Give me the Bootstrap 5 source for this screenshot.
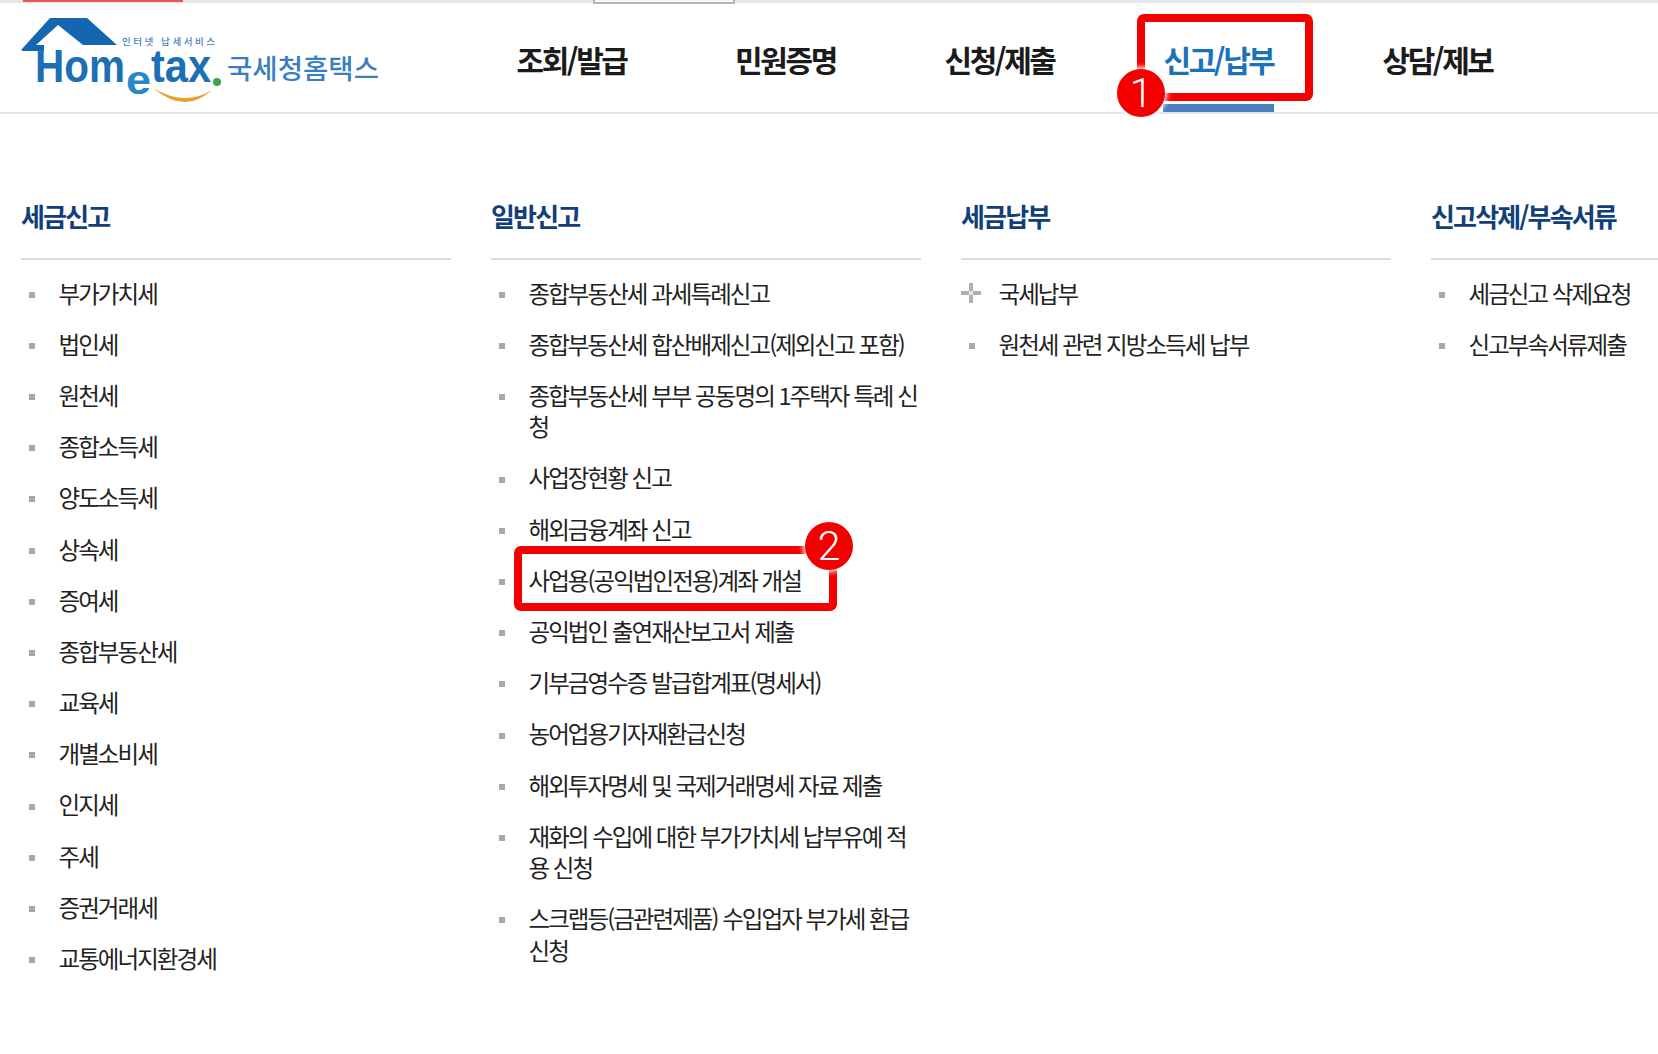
<!DOCTYPE html>
<html lang="ko">
<head>
    <meta charset="UTF-8">
    <meta name="viewport" content="width=device-width, initial-scale=1.0">
    <title>Hometax</title>
    <link href="https://cdn.jsdelivr.net/npm/bootstrap@5.3.0/dist/css/bootstrap.min.css" rel="stylesheet">
    <style>
        body {
            background: #fff;
            color: #222;
            font-family: "Noto Sans CJK KR", "Liberation Sans", sans-serif;
            overflow: hidden;
            height: 1054px;
        }
        .page-wrap { width: 1658px; height: 1054px; overflow: hidden; }
        .top-strip { height: 3px; background: #e6e6e6; padding-left: 23px; }
        .top-strip-red { width: 160px; height: 2px; background: #e8565a; }
        .top-strip-tab {
            width: 142px;
            height: 4px;
            margin-left: 410px;
            background: #f6f6f6;
            border: 2px solid #b4b4b4;
            border-top: 0;
        }
        .site-head { height: 111px; border-bottom: 2px solid #e2e2e2; }
        .logo-box { width: 360px; margin-left: 20px; margin-top: 14px; }
        .main-nav { margin-left: 136px; gap: 103px; }
        .main-nav a {
            width: 111px;
            height: 109px;
            padding-top: 34px;
            font-size: 30px;
            line-height: 44px;
            font-weight: 700;
            letter-spacing: -2.4px;
            white-space: nowrap;
            text-align: center;
            color: #1b1b1b;
            text-decoration: none;
        }
        .main-nav a.on { color: #1a72b8; border-bottom: 8px solid #4a7ebf; margin-left: 5px; }
        .main-nav a.on + a { margin-left: 5px; }
        .menu-wrap { padding: 0 0 0 21px; margin-top: 78px; gap: 40px; }
        .menu-col { width: 430px; flex: none; }
        .menu-title {
            height: 68px;
            border-bottom: 2px solid #dcdcdc;
            margin: 0 0 17.6px;
            font-size: 26px;
            line-height: 47px;
            font-weight: 700;
            letter-spacing: -1.85px;
            color: #123f7c;
        }
        .menu-col li {
            font-size: 23.5px;
            line-height: 31.3px;
            letter-spacing: -1.95px;
            margin-bottom: 19.9px;
            color: #222;
            word-break: break-all;
        }
        .mark-cell { width: 37.5px; height: 31.3px; flex: none; padding: 3px 0 0 8px; }
        .mark-dot { width: 6px; height: 6px; background: #a9a9a9; }
        .plus-ico { margin: -3px 0 0 -8px; }
        .red-box {
            position: absolute;
            border: 8px solid #f40000;
            border-radius: 7px;
        }
        .red-box-a { left: 1137px; top: 14px; width: 176px; height: 87px; }
        .red-box-b { left: 514px; top: 546px; width: 323px; height: 65px; }
        .red-num {
            position: absolute;
            width: 48px;
            height: 48px;
            border-radius: 50%;
            background: #f40000;
            color: #fff;
            font-family: Roboto, "Liberation Sans", sans-serif;
            font-weight: 300;
            font-size: 41px;
            line-height: 48px;
            text-align: center;
            box-shadow: 0 0 5px 2px #fff;
        }
        .red-num-a { left: 1117px; top: 69px; }
        .red-num-b { left: 805px; top: 522px; }
    </style>
</head>
<body>
<div class="page-wrap position-relative">
    <div class="top-strip d-flex">
        <div class="top-strip-red"></div>
        <div class="top-strip-tab"></div>
    </div>
    <header class="site-head d-flex">
        <div class="logo-box">
            <svg width="360" height="90" viewBox="0 0 360 90">
                <path d="M1 33 L30 1 L67 1 L97 28 L63 28 L38 8 L16 28 L24 28 L24 34 L3 34 Z" fill="#1566b0"/>
                <text x="15" y="65" font-family="Liberation Sans" font-weight="700" font-size="46" fill="#1b6fb5" textLength="90" lengthAdjust="spacingAndGlyphs">Hom</text>
                <text x="106" y="77" font-family="Liberation Sans" font-weight="700" font-size="40" fill="#2a86c8" textLength="25" lengthAdjust="spacingAndGlyphs">e</text>
                <text x="131" y="65" font-family="Liberation Sans" font-weight="700" font-size="46" fill="#1b6fb5" textLength="60" lengthAdjust="spacingAndGlyphs">tax</text>
                <circle cx="197" cy="65" r="4" fill="#3aa648"/>
                <path d="M133 71 Q165 98 192 73 Q165 90 133 71 Z" fill="#eaa12c"/>
                <text x="102" y="28" font-family="Noto Sans CJK KR" font-weight="500" font-size="9.5" fill="#3f7fbd" textLength="93">인터넷 납세서비스</text>
                <text x="207" y="62" font-family="Noto Sans CJK KR" font-weight="500" font-size="27" fill="#3a7fc1" textLength="152" lengthAdjust="spacingAndGlyphs">국세청홈택스</text>
            </svg>
        </div>
        <nav class="main-nav d-flex">
            <a href="#">조회/발급</a>
            <a href="#">민원증명</a>
            <a href="#">신청/제출</a>
            <a href="#" class="on">신고/납부</a>
            <a href="#">상담/제보</a>
        </nav>
    </header>

    <div class="menu-wrap d-flex" id="menuWrap"></div>

    <div class="red-box red-box-a"></div>
    <div class="red-num red-num-a">1</div>
    <div class="red-box red-box-b"></div>
    <div class="red-num red-num-b">2</div>
</div>

<script>
    const menus = [
        ["세금신고", ["부가가치세", "법인세", "원천세", "종합소득세", "양도소득세", "상속세", "증여세", "종합부동산세", "교육세", "개별소비세", "인지세", "주세", "증권거래세", "교통에너지환경세"]],
        ["일반신고", ["종합부동산세 과세특례신고", "종합부동산세 합산배제신고(제외신고 포함)", "종합부동산세 부부 공동명의 1주택자 특례 신청", "사업장현황 신고", "해외금융계좌 신고", "사업용(공익법인전용)계좌 개설", "공익법인 출연재산보고서 제출", "기부금영수증 발급합계표(명세서)", "농어업용기자재환급신청", "해외투자명세 및 국제거래명세 자료 제출", "재화의 수입에 대한 부가가치세 납부유예 적용 신청", "스크랩등(금관련제품) 수입업자 부가세 환급신청"]],
        ["세금납부", ["+국세납부", "원천세 관련 지방소득세 납부"]],
        ["신고삭제/부속서류", ["세금신고 삭제요청", "신고부속서류제출"]]
    ];
    const plus = '<svg class="plus-ico" width="20" height="20" viewBox="0 0 20 20"><path d="M8 0h4v8h8v4h-8v8H8v-8H0V8h8z" fill="#b0b0b0"/><rect x="8" y="8" width="4" height="4" fill="#e4e4e4"/></svg>';
    document.getElementById("menuWrap").innerHTML = menus.map(function (m) {
        const rows = m[1].map(function (t) {
            const isPlus = t[0] === "+";
            const mark = isPlus ? plus : '<span class="mark-dot"></span>';
            return '<li class="d-flex"><span class="mark-cell d-flex align-items-center">' + mark + '</span><span>' + t.replace("+", "") + '</span></li>';
        }).join("");
        return '<section class="menu-col"><h3 class="menu-title">' + m[0] + '</h3><ul class="list-unstyled m-0">' + rows + '</ul></section>';
    }).join("");
</script>
<script src="https://cdn.jsdelivr.net/npm/bootstrap@5.3.0/dist/js/bootstrap.bundle.min.js"></script>
</body>
</html>
